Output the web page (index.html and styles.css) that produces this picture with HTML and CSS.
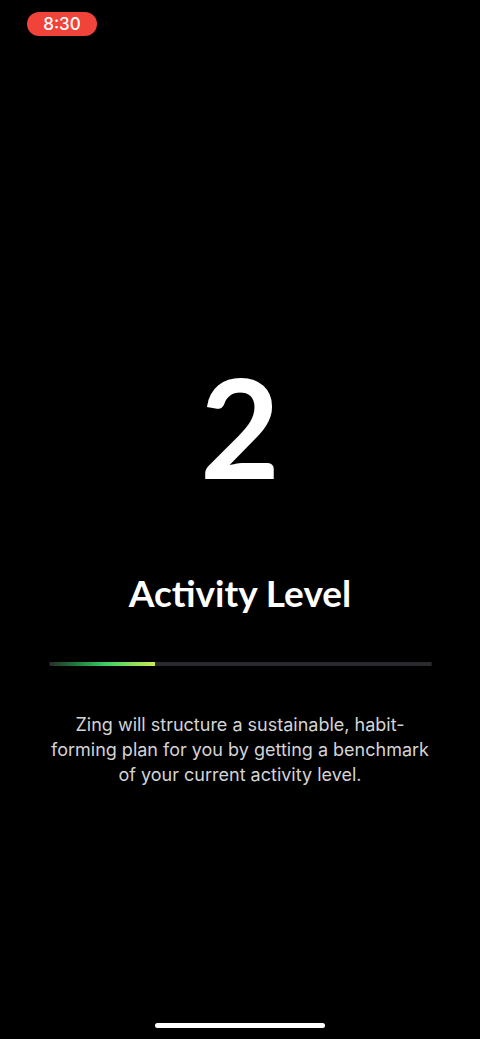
FILE: index.html
```html
<!DOCTYPE html>
<html>
<head>
<meta charset="utf-8">
<link rel="stylesheet" href="styles.css">
</head>
<body>
<div class="screen">
  <div class="status">
    <span class="time-pill">8:30</span>
  </div>
  <div class="content">
    <div class="big-num">2</div>
    <h1 class="title">Activity Level</h1>
    <div class="track"><div class="fill" style="width:27.9%"></div></div>
    <p class="desc">Zing will structure a sustainable, habit-forming plan for you by getting a benchmark of your current activity level.</p>
  </div>
  <div class="home-bar"></div>
</div>
</body>
</html>
```
FILE: styles.css
```css
html, body {
  margin: 0;
  padding: 0;
  background: #000;
}
.screen {
  width: 480px;
  height: 1039px;
  background: #000;
  display: flex;
  flex-direction: column;
  font-family: "Lato", sans-serif;
  color: #fff;
}
.status {
  height: 48px;
  padding: 12px 0 0 27px;
  box-sizing: border-box;
}
.time-pill {
  display: inline-flex;
  align-items: center;
  justify-content: center;
  width: 70px;
  height: 24px;
  border-radius: 12px;
  background: #f0433a;
  color: #fff;
  font-family: "Inter", sans-serif;
  font-size: 17px;
  font-weight: 500;
}
.content {
  flex: 1;
  display: flex;
  flex-direction: column;
  align-items: center;
  padding-top: 303px;
}
.big-num {
  font-size: 138px;
  font-weight: 700;
  line-height: 150px;
}
.title {
  margin: 70px 0 0;
  font-size: 37px;
  font-weight: 700;
  line-height: 44px;
}
.track {
  margin-top: 47px;
  width: 383px;
  height: 4px;
  background: #2a2b2e;
  border-radius: 2px;
  overflow: hidden;
}
.fill {
  height: 100%;
  background: linear-gradient(90deg, rgba(20,60,30,0) 0%, #1e7a3a 25%, #3fd163 55%, #c9ea5a 100%);
}
.desc {
  margin: 46px 0 0;
  width: 390px;
  text-align: center;
  font-family: "Inter", sans-serif;
  font-size: 18px;
  line-height: 25px;
  color: #d4d4d6;
}
.home-bar {
  align-self: center;
  width: 170px;
  height: 5px;
  border-radius: 3px;
  background: #fff;
  margin-bottom: 11px;
}
```
